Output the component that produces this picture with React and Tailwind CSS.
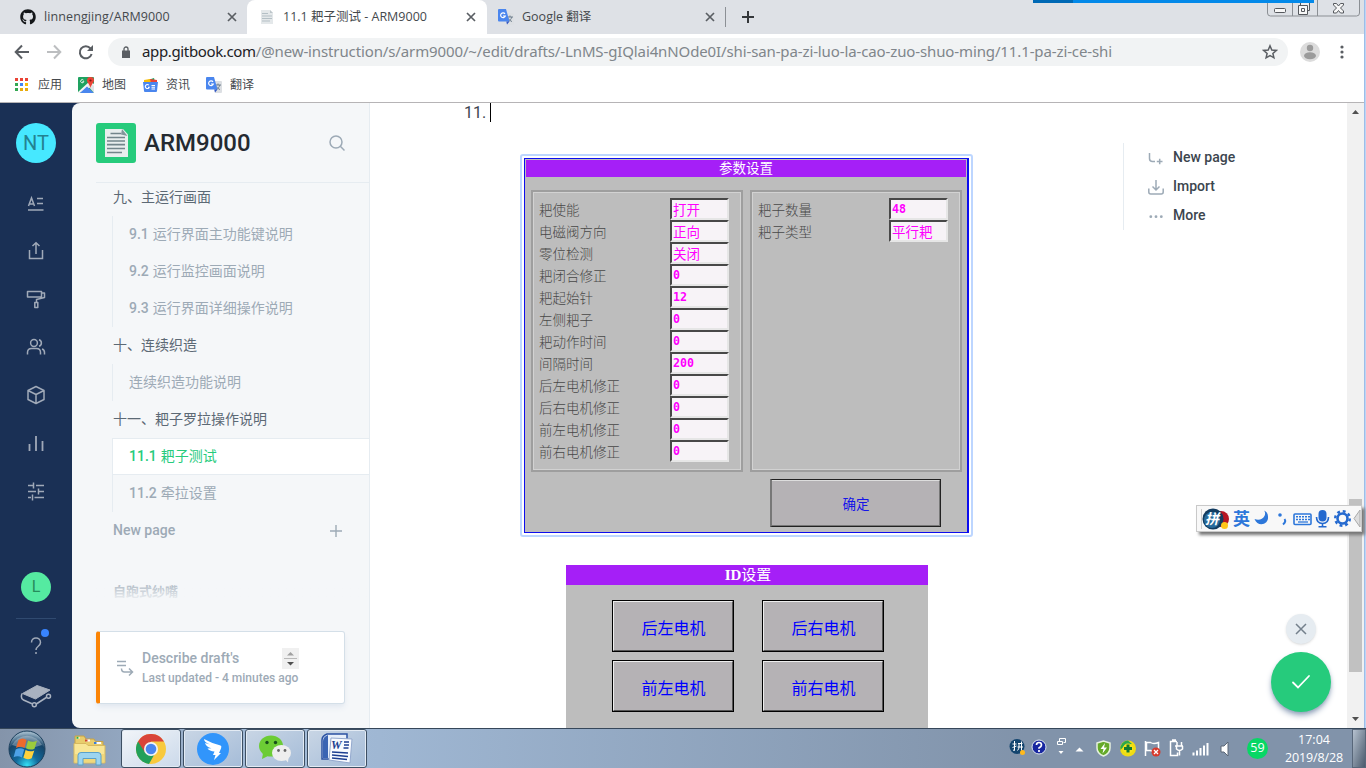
import React from "react";
import { FaGithub } from "react-icons/fa";

const UI = "font-['Open_Sans','Noto_Sans_CJK_SC',sans-serif]";
const RB = "font-['Roboto','Noto_Sans_CJK_SC',sans-serif]";
const HMI = "font-['DejaVu_Sans_Mono','Noto_Sans_CJK_SC',monospace]";

function CloseX() {
  return (
    <svg width="10" height="10" viewBox="0 0 10 10" stroke="#5a5e63" strokeWidth="1.7">
      <path d="M1 1l8 8M9 1l-8 8" />
    </svg>
  );
}

function Translate() {
  return (
    <svg width="16" height="16" viewBox="0 0 16 16" className="shrink-0">
      <path d="M6 4h9a1 1 0 0 1 1 1v10a1 1 0 0 1-1 1H9z" fill="#dcdfe3" />
      <path d="M9 8h6M12 6.5V8M13.8 8c-.4 2-1.8 3.6-3.6 4.5M10.6 9.5c.8 1.5 2 2.600 3.400 3" stroke="#6f7f8d" fill="none" />
      <path d="M1 0h7l3.500 12.500H1a1 1 0 0 1-1-1V1a1 1 0 0 1 1-1z" fill="#4a86ee" />
      <path d="M8.300 12.500h3.200L9 15.600z" fill="#3056c4" />
      <path d="M7 4.800A2.400 2.400 0 1 0 7.300 7H5" stroke="#fff" strokeWidth="1.200" fill="none" />
    </svg>
  );
}

function Tabs() {
  return (
    <div className="relative flex h-[34px] shrink-0 bg-[#dee1e6] text-[12px] text-[#45494d]">
      <div className="flex w-[247px] items-center pl-5 pr-[10px]">
        <FaGithub size={16} color="#14171a" />
        <span className="ml-2 flex-1 pt-px text-[12.500px] tracking-[0.1px]">linnengjing/ARM9000</span>
        <CloseX />
      </div>
      <div className="flex w-[240px] items-center rounded-t-lg bg-white pl-[13px] pr-[11px]">
        <svg width="14" height="16" viewBox="0 0 14 16">
          <path d="M1 1h9l3 3v11H1z" fill="#e4e8ea" />
          <path d="M10 1v3h3" fill="#bdc6ca" />
          <path d="M2 4.500h6M2 7h10M2 9.500h10M2 12h8" stroke="#b4bfc5" />
        </svg>
        <span className="ml-[9px] flex-1 pt-px text-[12.500px]">11.1 耙子测试 - ARM9000</span>
        <CloseX />
      </div>
      <div className="flex w-[238px] items-center pl-[11px] pr-[10px]">
        <Translate />
        <span className="ml-2 flex-1 pt-px text-[12.500px]">Google 翻译</span>
        <CloseX />
      </div>
      <div className="my-[7px] w-px bg-[#8c9095]" />
      <div className="ml-4 flex items-center">
        <svg width="12" height="12" viewBox="0 0 12 12" stroke="#34373a" strokeWidth="2">
          <path d="M6 0v12M0 6h12" />
        </svg>
      </div>
      <svg className="absolute left-[1266px] top-0" width="96" height="18" viewBox="0 0 96 18" fill="none">
        <path d="M1.500 0v13q0 3 3 3h86q3 0 3-3V0M26.500 0v16M51.500 0v16" stroke="#8b8f94" />
        <rect x="8.500" y="8.500" width="11" height="4" rx="1" fill="#f7f7f7" stroke="#55585d" />
        <path d="M34.500 2.500h9v8h-9z" fill="#eee" stroke="#55585d" />
        <path d="M32.500 5.500h9v9h-9z" fill="#f7f7f7" stroke="#55585d" />
        <path d="M35.500 8.500h3v3h-3z" stroke="#55585d" />
        <path d="M67.500 3.500h3l2 2.500 2-2.500h3v1.500l-3 3 3 3v2h-3l-2-2.500-2 2.500h-3v-2l3-3-3-3z" fill="#f7f7f7" stroke="#55585d" />
      </svg>
      <div className="absolute left-[1033px] top-0 flex h-[3px] w-[281px] bg-[#0389e9]">
        <div className="w-10 bg-[#0069b5]" />
      </div>
    </div>
  );
}

function Toolbar() {
  return (
    <div className="flex h-9 shrink-0 items-center bg-white">
      <svg className="ml-[14px] shrink-0" width="82" height="18" viewBox="0 0 82 18" fill="none" strokeWidth="2">
        <path d="M15 9H2M8 2.500L1.700 9 8 15.500" stroke="#5a5e63" />
        <path d="M33 9h13M40 2.500L46.300 9 40 15.500" stroke="#bcbec0" />
        <path d="M76.500 5.500A6 6 0 1 0 77.600 11" stroke="#5a5e63" />
        <path d="M79 2v6h-6z" fill="#5a5e63" />
      </svg>
      <div className="ml-[12px] flex h-7 w-[1180px] items-center rounded-full bg-[#f1f3f4] pl-[14px] pr-[10px]">
        <svg width="8" height="12" viewBox="0 0 8 12">
          <path d="M0 4.500h8V12H0z" fill="#5a5e63" />
          <path d="M2 5V3a2 2 0 0 1 4 0v2" stroke="#5a5e63" strokeWidth="1.300" fill="none" />
        </svg>
        <span className="ml-3 flex-1 whitespace-nowrap pb-[2px] font-['Noto_Sans',sans-serif] text-[15px] leading-[20px] tracking-[-0.12px] text-[#80868b]">
          <span className="tracking-[-0.36px] text-[#202124]">app.gitbook.com</span>
          /@new-instruction/s/arm9000/~/edit/drafts/-LnMS-gIQlai4nNOde0I/shi-san-pa-zi-luo-la-cao-zuo-shuo-ming/11.1-pa-zi-ce-shi
        </span>
        <svg width="16" height="16" viewBox="0 0 16 16" fill="none" stroke="#5a5e63" strokeWidth="1.500">
          <path d="M8 1.800l1.800 4.200 4.500.4-3.400 3 1 4.400L8 11.500l-3.900 2.300 1-4.400-3.400-3 4.500-.4z" />
        </svg>
      </div>
      <svg className="ml-3" width="20" height="20" viewBox="0 0 20 20">
        <circle cx="10" cy="10" r="10" fill="#dcdcdc" />
        <circle cx="10" cy="6" r="3.200" fill="#9b9b9b" />
        <ellipse cx="10" cy="13.700" rx="6" ry="3.500" fill="#9b9b9b" />
      </svg>
      <svg className="ml-[20px]" width="4" height="14" viewBox="0 0 4 14" fill="#5a5e63">
        <circle cx="2" cy="2" r="1.600" /><circle cx="2" cy="7" r="1.600" /><circle cx="2" cy="12" r="1.600" />
      </svg>
    </div>
  );
}

const appDots = ["#ea4335", "#ea4335", "#ea4335", "#34a853", "#4285f4", "#fbbc05", "#34a853", "#e8ab0c", "#e8ab0c"];

function Bookmarks() {
  return (
    <div className="flex h-8 shrink-0 items-center bg-white pb-[3px] pl-[15px] text-[12px] text-[#45494d]">
      <div className="grid w-[13px] grid-cols-3 gap-[2px]">
        {appDots.map((c, i) => <i key={i} className="h-[3px] w-[3px]" style={{ background: c }} />)}
      </div>
      <span className="ml-[10px] w-10 pt-px">应用</span>
      <svg width="16" height="16" viewBox="0 0 16 16">
        <rect width="16" height="16" rx="1" fill="#1fa260" />
        <path d="M0 15L12 4l4 3v2l-8 3-6 4H0z" fill="#f4f4f4" />
        <path d="M2 16l7-6.500 7 6.500z" fill="#4a86ee" />
        <path d="M12 6l4 3v7l-6-7z" fill="#dfe3e6" />
        <path d="M12.500 0a3.500 3.500 0 0 1 3.500 3.600c0 2.400-2.600 3.400-3.500 7.400C11.600 7 9 6 9 3.600A3.500 3.500 0 0 1 12.500 0z" fill="#ea4335" />
        <circle cx="12.500" cy="3.500" r="1.100" fill="#811411" />
        <path d="M5.500 3.200A1.600 1.600 0 1 0 5.800 4.600H4.500" stroke="#fff" fill="none" strokeWidth=".9" />
      </svg>
      <span className="ml-2 w-[41px] pt-px">地图</span>
      <svg width="15" height="14" viewBox="0 0 15 14">
        <path d="M2 3l9-3 1 4H2z" fill="#1fa260" />
        <path d="M7 1l7 1v4H7z" fill="#ea4335" />
        <path d="M1 2l6-1 1 4H1z" fill="#fbbc05" />
        <path d="M0 4h15l-1 9a1 1 0 0 1-1 1H2a1 1 0 0 1-1-1z" fill="#4a86ee" />
        <path d="M5.800 7.200A2 2 0 1 0 6.200 9.200H5M8.500 7.500H12M8.500 9.200H12M8.500 11H12" stroke="#fff" fill="none" strokeWidth="1.100" />
      </svg>
      <span className="ml-[8px] w-10 pt-px">资讯</span>
      <Translate />
      <span className="ml-2 pt-px">翻译</span>
    </div>
  );
}

const railIcons = [
  <><path d="M2.500 13L5.500 5l3 8M3.500 11h4M11 5.500h6M11 10.500h6M2 17h15.500" /></>,
  <><path d="M3.500 9v8.500h13V9M10 13V2M6.500 5L10 1.800 13.500 5" /></>,
  <><path d="M1.500 2.500h14v5.500h-14zM15.500 4h3v4.500l-8 2v3M8.800 13.500h3v5h-3z" strokeLinejoin="round" /></>,
  <><circle cx="8" cy="6" r="3.400" /><path d="M1.500 17.500v-2q0-4 4-4h5q4 0 4 4v2M13 2.700a3.400 3.400 0 0 1 0 6.500M16 12q2.500.7 2.500 3.500v2" /></>,
  <><path d="M10 1.500l8 4v9l-8 4-8-4v-9zM2 5.500l8 4 8-4M10 9.500v9" strokeLinejoin="round" /></>,
  <><path d="M3.500 11v7M10 3v15M16.500 8v10" strokeWidth="1.800" /></>,
  <><path d="M2 4.500h5M10 4.500h8M7.500 1.500v6M2 10.500h8M13 10.500h5M12.500 7.500v6M2 16.500h3M8.500 16.500H18M6.500 13.500v6" /></>,
];

function Rail() {
  return (
    <div className="flex w-[72px] shrink-0 flex-col items-center bg-[#1a3055] pt-5">
      <div className="flex h-10 w-10 items-center justify-center rounded-full bg-[#46e8ff] text-[20px] text-[#238291]">NT</div>
      <div className="mt-[30px] flex flex-col gap-[28px]">
        {railIcons.map((p, i) => (
          <svg key={i} width="20" height="20" viewBox="0 0 20 20" fill="none" stroke="#a0a9b8" strokeWidth="1.500">{p}</svg>
        ))}
      </div>
      <div className="mt-[71px] flex h-[30px] w-[30px] items-center justify-center rounded-full bg-[#55eaa1] text-[16px] text-[#268d5c]">L</div>
      <div className="mt-4 h-px w-10 bg-[#304a70]" />
      <svg className="mt-[9px] ml-[2px]" width="30" height="30" viewBox="0 0 30 30" fill="none">
        <path d="M9.500 14.500c0-6 9-6 9 0 0 4-4.500 3.500-4.500 7.500" stroke="#a0a9b8" strokeWidth="1.500" />
        <circle cx="14" cy="25" r="1" fill="#a0a9b8" />
        <circle cx="23" cy="5" r="4" fill="#3884ff" />
      </svg>
      <svg className="mt-[26px]" width="32" height="24" viewBox="0 0 32 24" fill="none">
        <path d="M2.500 9.500L17 1.500 30 6 15.500 15z" fill="#a9b2c0" stroke="#a9b2c0" strokeLinejoin="round" />
        <path d="M2 9.500q-1.800 5 1.500 6.500l8.500 3.800M16.300 20l10-6.500" stroke="#a9b2c0" strokeWidth="1.500" />
        <circle cx="14.300" cy="20.700" r="2" stroke="#a9b2c0" strokeWidth="1.500" />
        <circle cx="28.500" cy="12.300" r="2" stroke="#a9b2c0" strokeWidth="1.500" />
      </svg>
    </div>
  );
}

function Chapter({ children }) {
  return <div className="flex h-[37px] items-center pl-[17px] text-[#5c6975]">{children}</div>;
}
function Page({ children }) {
  return <div className="flex h-[37px] items-center pl-4">{children}</div>;
}

function Sidebar() {
  return (
    <div className="flex w-[298px] shrink-0 flex-col rounded-l-lg border-r border-[#e6ecf1] bg-[#f5f7f9] pl-6 text-[14px] font-medium text-[#9daab6]">
      <div className="flex h-20 shrink-0 items-center border-b border-[#e6ecf1] pr-[23px]">
        <svg width="40" height="40" viewBox="0 0 40 40">
          <rect width="40" height="40" rx="3" fill="#26cb7c" />
          <path d="M9 6h18l5 5.500V34H9z" fill="#e8eeee" />
          <path d="M26 6l5.500 7L25 11.500z" fill="#82969b" />
          <path d="M14.500 10.500H25M11 14.500h18M11 18h18M11 21.700h18M11 25.500h18M11 29.500h15" stroke="#72858b" strokeWidth="1.700" />
        </svg>
        <span className="ml-2 flex-1 text-[24px] text-[#242a31]">ARM9000</span>
        <svg width="18" height="18" viewBox="0 0 18 18" fill="none" stroke="#9daab6" strokeWidth="1.500">
          <circle cx="8" cy="8" r="6" /><path d="M12.300 12.300L16.500 16.500" />
        </svg>
      </div>
      <div className="flex h-[33px] shrink-0 items-center pb-1 pl-[17px] font-normal text-[#5c6975]">九、主运行画面</div>
      <div className="ml-4 border-l border-[#e6ecf1] font-normal">
        <Page><b className="mr-1 font-medium">9.1</b>运行界面主功能键说明</Page>
        <Page><b className="mr-1 font-medium">9.2</b>运行监控画面说明</Page>
        <Page><b className="mr-1 font-medium">9.3</b>运行界面详细操作说明</Page>
      </div>
      <div className="font-normal"><Chapter>十、连续织造</Chapter></div>
      <div className="ml-4 border-l border-[#e6ecf1] font-normal"><Page>连续织造功能说明</Page></div>
      <div className="font-normal"><Chapter>十一、耙子罗拉操作说明</Chapter></div>
      <div className="ml-4 border-l border-[#e6ecf1] font-normal">
        <div className="flex h-[37px] items-center border-y border-[#e6ecf1] bg-white pl-4 text-[#26cb7c]"><b className="mr-1 font-medium">11.1</b>耙子测试</div>
        <Page><b className="mr-1 font-medium">11.2</b>牵拉设置</Page>
      </div>
      <div className="flex h-[37px] items-center justify-between pl-[17px] pr-[27px]">
        <span>New page</span>
        <svg width="12" height="12" viewBox="0 0 12 12" stroke="#9daab6" strokeWidth="1.400"><path d="M6 0v12M0 6h12" /></svg>
      </div>
      <div className="relative mt-[32px] h-[21px] pl-[17px] text-[13px] font-bold leading-[21px] text-[#9daab6]">
        自跑式纱嘴
        <div className="absolute inset-0 bg-gradient-to-b from-[#f5f7f9]/10 to-[#f5f7f9]" />
      </div>
      <div className="mr-6 mt-[29px] flex h-[73px] shrink-0 items-center rounded-[3px] border border-l-4 border-[#d4dfe8] border-l-[#fb8405] bg-white pl-[17px] shadow-md shadow-slate-200">
        <svg width="17" height="18" viewBox="0 0 17 18" fill="none" stroke="#9daab6" strokeWidth="1.500">
          <path d="M0 2.500h9M0 6.500h9M4.500 9.500q0 3.500 3 3.500H15M12 9.500l3.500 3.500L12 16.500" />
        </svg>
        <div className="ml-2 w-[157px]">
          <div className="flex h-[21px] items-center justify-between">
            <span>Describe draft's</span>
            <svg width="17" height="21" viewBox="0 0 17 21">
              <rect width="17" height="21" fill="#f0f0f0" />
              <path d="M5 7.500L8.500 4 12 7.500z" fill="#a0a0a0" /><path d="M2 10.500h13" stroke="#b8b8b8" />
              <path d="M5 14l3.500 3.500L12 14z" fill="#505050" />
            </svg>
          </div>
          <div className="h-[18px] whitespace-nowrap text-[12px] leading-[18px]">Last updated - 4 minutes ago</div>
        </div>
      </div>
    </div>
  );
}

const leftFields = [
  ["耙使能", "打开"], ["电磁阀方向", "正向"], ["零位检测", "关闭"], ["耙闭合修正", "0"], ["耙起始针", "12"], ["左侧耙子", "0"],
  ["耙动作时间", "0"], ["间隔时间", "200"], ["后左电机修正", "0"], ["后右电机修正", "0"], ["前左电机修正", "0"], ["前右电机修正", "0"],
];
const rightFields = [["耙子数量", "48"], ["耙子类型", "平行耙"]];

function Fields({ rows }) {
  return (
    <div className="h-[282px] w-[212px] border-2 border-[#9e9e9e]">
      <div className="h-full border border-[#d2d2d2] pl-[5px] pr-[11px] pt-[5px]">
        {rows.map(([k, v]) => (
          <div key={k} className="flex h-[22px] items-start justify-between">
            <span className="pt-[2px] text-[13.500px] font-light leading-[20px] text-[#484848]">{k}</span>
            <span className={"h-[22px] w-[59px] border-b-2 border-l-2 border-r-2 border-t-2 border-b-[#e6e6e6] border-l-[#484848] border-r-[#e6e6e6] border-t-[#484848] bg-[#f7f3f7] text-[#ff00ff] " + (/\d/.test(v) ? "pl-px text-[11.700px] font-bold leading-[19px]" : "pl-px text-[13.500px] leading-[20px]")}>{v}</span>
          </div>
        ))}
      </div>
    </div>
  );
}

function MotorButton({ children }) {
  return (
    <div className="h-[52px] w-[122px] border border-black">
      <div className="flex h-full items-center justify-center border-b border-l border-r border-t border-b-[#555] border-l-[#eee] border-r-[#555] border-t-[#eee] bg-[#b5b2b5] pl-px pt-[6px] text-[16px] text-[#0000ff]">{children}</div>
    </div>
  );
}

function Editor() {
  return (
    <div className="flex flex-1 overflow-hidden bg-white">
      <div className="w-[753px] shrink-0">
        <div className="flex h-[51px] items-start pl-[94px] text-[16px] leading-[19px] text-[#3b454e]">
          11.<span className="ml-[4px] h-[19px] w-px bg-black" />
        </div>
        <div className={"ml-[150px] h-[383px] w-[453px] rounded-[3px] border-2 border-[#bdd6ff] p-[2px] pr-[2px] " + HMI}>
          <div className="flex h-[375px] w-[445px] flex-col border border-r-2 border-[#0d0dee] bg-[#bdbdbd] pt-px">
            <div className="mx-px h-[17px] bg-[#a51ff7] text-center text-[13.500px] leading-[16px] text-white">参数设置</div>
            <div className="mt-[13px] flex gap-[7px] pl-[6px]">
              <Fields rows={leftFields} />
              <Fields rows={rightFields} />
            </div>
            <div className="ml-[245px] mt-[7px] h-[48px] w-[171px] border border-l-2 border-[#222] border-l-[#777]">
              <div className="flex h-full items-center justify-center border-b border-r border-t border-b-[#777] border-r-[#777] border-t-[#ddd] bg-[#b5b2b5] pl-px pt-[3px] text-[13.500px] text-[#1515e8]">确定</div>
            </div>
          </div>
        </div>
        <div className={"ml-[196px] mt-[28px] h-[170px] w-[362px] bg-[#bdbdbd] " + HMI}>
          <div className="h-[20px] bg-[#a51ff7] pl-[2px] text-center text-[15px] leading-[21px] text-white"><b className="font-['Liberation_Serif',serif]">ID</b>设置</div>
          <div className="mt-[15px] grid grid-cols-[122px_122px] gap-x-[28px] gap-y-2 pl-[46px]">
            <MotorButton>后左电机</MotorButton>
            <MotorButton>后右电机</MotorButton>
            <MotorButton>前左电机</MotorButton>
            <MotorButton>前右电机</MotorButton>
          </div>
        </div>
      </div>
      <div className="mt-10 flex h-[87px] flex-col border-l border-[#e6ecf1] pl-6 text-[14px] font-medium text-[#3b454e]">
        <div className="flex h-[29px] items-center gap-[9px]">
          <svg width="16" height="16" viewBox="0 0 16 16" fill="none" stroke="#9daab6" strokeWidth="1.500"><path d="M1.500 3v5.500q0 3 3 3H7M8.800 11.500H14.500M11.700 8.700v5.600" /></svg>
          New page
        </div>
        <div className="flex h-[29px] items-center gap-[9px]">
          <svg width="16" height="16" viewBox="0 0 16 16" fill="none" stroke="#9daab6" strokeWidth="1.500"><path d="M.8 9.500V13q0 2 2 2h10.400q2 0 2-2V9.500M8 1v10M4.500 7.500L8 11l3.500-3.500" /></svg>
          Import
        </div>
        <div className="flex h-[29px] items-center gap-[9px]">
          <svg width="16" height="16" viewBox="0 0 16 16" fill="#9daab6"><circle cx="2.800" cy="8.700" r="1.400" /><circle cx="8" cy="8.700" r="1.400" /><circle cx="13.300" cy="8.700" r="1.400" /></svg>
          More
        </div>
      </div>
    </div>
  );
}

function Scrollbar() {
  return (
    <div className="flex w-[17px] shrink-0 flex-col items-center bg-[#f1f1f1]">
      <svg width="17" height="17" viewBox="0 0 17 17"><path d="M5 11l3.500-4 3.500 4z" fill="#505050" /></svg>
      <div className="mt-[379px] h-[173px] w-[13px] bg-[#c1c1c1]" />
      <div className="flex-1" />
      <svg width="17" height="17" viewBox="0 0 17 17"><path d="M5 6l3.500 4L12 6z" fill="#505050" /></svg>
    </div>
  );
}

function Ime() {
  return (
    <div className="absolute left-[1196px] top-[505px] flex h-[27px] w-[166px] items-center border border-[#c9c9c9] bg-[#f8f8f8] shadow-[3px_3px_3px_#777]">
      <svg width="164" height="25" viewBox="0 0 164 25" fill="none">
        <path d="M4.500 3v20" stroke="#ccc" />
        <circle cx="24" cy="13" r="8" fill="#b51523" />
        <circle cx="16" cy="13" r="10.500" fill="#123c60" />
        <circle cx="15" cy="14" r="8" fill="#286b9b" />
        <path d="M67 4.500c3.500 4-1.500 11.500-9.500 8.500 3 8.500 14.500 6 13.500-2.500 0-3-1.500-5-4-6z" fill="#2d77da" />
        <circle cx="83" cy="9" r="1.800" fill="#2d77da" />
        <path d="M87.500 13q2 2.500-1.500 5.500" stroke="#2d77da" strokeWidth="2" />
        <rect x="97" y="8" width="17" height="10.500" rx="1" stroke="#2d77da" strokeWidth="1.600" />
        <path d="M99 10.800h14M99 13.400h14" stroke="#2d77da" strokeWidth="1.500" strokeDasharray="2 1" />
        <path d="M101 16h10" stroke="#2d77da" strokeWidth="1.300" />
        <rect x="121.500" y="4" width="8" height="11.500" rx="4" fill="#2469cf" />
        <path d="M119.500 11q0 6.500 6 6.500t6-6.500M125.500 17.500v3M121.500 20.700h8" stroke="#2469cf" strokeWidth="1.600" />
        <circle cx="145.500" cy="12.500" r="5" stroke="#2469cf" strokeWidth="2.600" />
        <circle cx="145.500" cy="12.500" r="7.300" stroke="#2469cf" strokeWidth="2.400" strokeDasharray="2.870 2.870" />
        <path d="M163 4l-6 8.500 6 8.500z" fill="#ddd" stroke="#aaa" />
      </svg>
      <span className="absolute left-[8px] text-[14px] font-bold italic text-white">拼</span>
      <span className="absolute left-[24px] top-[16px] h-[7px] w-[7px] rounded-full bg-[#ffc61a]" />
      <span className="absolute left-[36px] text-[17px] font-bold text-[#2d77da]">英</span>
    </div>
  );
}

function AppButton({ active, children }) {
  return (
    <div className={"flex h-[39px] w-[60px] items-center justify-center rounded-[3px] border border-[#3d4f63] shadow-[inset_0_0_0_1px_#e3ebf4] " + (active ? "bg-gradient-to-br from-[#f2f5f9] to-[#cbd9ea]" : "bg-gradient-to-br from-[#c9d6e5] to-[#a5bcd8]")}>
      {children}
    </div>
  );
}

function Taskbar() {
  return (
    <div className="flex h-10 shrink-0 border-t border-[#36475a] bg-gradient-to-r from-[#8494aa] via-[#a4bdda] via-20% to-[#8193aa] to-75%">
      <svg className="ml-2 mt-px shrink-0" width="38" height="38" viewBox="0 0 38 38">
        <defs>
          <radialGradient id="orb" cx=".5" cy=".95" r=".9"><stop offset="0" stopColor="#35e0f5" /><stop offset=".35" stopColor="#126a9c" /><stop offset=".75" stopColor="#164468" /><stop offset="1" stopColor="#9cb6c8" /></radialGradient>
        </defs>
        <circle cx="19" cy="19" r="18" fill="url(#orb)" stroke="#1c3f5c" />
        <path d="M4 15a16 14 0 0 1 30 0q-15 6-30 0z" fill="#fff" opacity=".3" />
        <path d="M10.500 10q4-3 8 0l-2 8q-4-2.500-8.500 0z" fill="#ee6a2c" />
        <path d="M20 10.500q4.500 2.500 9 .2l-2.500 8q-4 2-8.500-.4z" fill="#9bcb3c" />
        <path d="M7.700 19.500q4.500-2.500 8.500 0l-2.400 8q-4-2.500-8.200-.2z" fill="#4da2e6" />
        <path d="M17.600 20q4.500 2.500 8.700.4l-2.600 7.800q-4.200 2.200-8.300-.4z" fill="#ffd23d" />
      </svg>
      <svg className="ml-[27px] mt-[6px] shrink-0" width="34" height="31" viewBox="0 0 34 31">
        <path d="M2 1h9l2 3h8l1.500 2.500H30V14H2z" fill="#e9cd6c" stroke="#c5a248" />
        <path d="M3.500 2.800h3M13 5.500h4M22 8h6" stroke="#fff" strokeWidth="1.800" />
        <path d="M3.500 2.800h2" stroke="#2faf42" strokeWidth="2" /><path d="M12 5.500h2.500" stroke="#d0442c" strokeWidth="2" /><path d="M21 8h2.500" stroke="#3b7fd6" strokeWidth="2" />
        <path d="M1 8.500h12l2 2h17V28H1z" fill="#f8e696" stroke="#d7b95f" />
        <path d="M2 19h29v8H2z" fill="#f1d87b" />
        <path d="M5 30V20.500q0-3 3-3h17q3 0 3 3V30h-5v-6.500H10V30z" fill="#9cd4ef" stroke="#5ba1c9" />
      </svg>
      <div className="ml-[14px] flex gap-[2px]">
        <AppButton active>
          <svg width="30" height="30" viewBox="0 0 30 30">
            <circle cx="15" cy="15" r="15" fill="#f8c93d" />
            <path d="M15 15L2 7.500a15 15 0 0 0 11 22.400l6.500-11.500z" fill="#22a05a" />
            <path d="M2 7.500a15 15 0 0 1 26 0H15L9 18.500z" fill="#d9443a" />
            <circle cx="15" cy="15" r="7" fill="#f3f3f3" /><circle cx="15" cy="15" r="5.300" fill="#4a86ee" />
          </svg>
        </AppButton>
        <AppButton>
          <svg width="32" height="32" viewBox="0 0 32 32"><circle cx="16" cy="16" r="16" fill="#3195fb" /><path d="M7 6q7 4 16.500 6.500 1.500.5.500 3L22 20h2l-7 7 1.500-5H16l1.500-3.500q-5-.5-7-3l4-.3Q9 14 8 10l5 1.500Q7 9 7 6z" fill="#fff" /></svg>
        </AppButton>
        <AppButton>
          <svg width="32" height="28" viewBox="0 0 32 28">
            <ellipse cx="12" cy="11" rx="12" ry="10.500" fill="#6ccc35" /><path d="M4 18l-1 6 6-3z" fill="#6ccc35" />
            <circle cx="8" cy="7.500" r="1.700" fill="#17501b" /><circle cx="16.500" cy="7.500" r="1.700" fill="#17501b" />
            <ellipse cx="22.500" cy="18" rx="9.500" ry="8" fill="#eeeeee" /><path d="M26 24l3 3.500.5-5z" fill="#eee" />
            <circle cx="19.500" cy="15.500" r="1.400" fill="#666" /><circle cx="26" cy="15.500" r="1.400" fill="#666" />
          </svg>
        </AppButton>
        <AppButton>
          <span className="relative">
            <svg width="32" height="31" viewBox="0 0 32 31">
              <path d="M6 1h20v25H1V7q0-4 5-6z" fill="#e7effa" stroke="#2b52a3" strokeWidth="1.500" />
              <path d="M7 2v23H2V8q0-4 5-6z" fill="#3a64b3" />
              <path d="M10 5l21 1-2 24-21-3z" fill="#f9fbff" stroke="#94a9ce" />
              <path d="M23 9h5M23 12h5M22.500 15h5M11 19l16 1M11 22l16 1.500M11 25l15 1.500" stroke="#1d3f91" strokeWidth="1.500" />
            </svg>
            <b className="absolute left-[10px] top-[5px] font-['Liberation_Serif',serif] text-[12px] italic leading-[14px] text-[#1d3f91]">W</b>
          </span>
        </AppButton>
      </div>
      <div className="flex-1" />
      <svg className="mt-[9px]" width="230" height="24" viewBox="0 0 230 24" fill="none">
        <circle cx="8" cy="8.500" r="7.500" fill="#13456f" /><path d="M3.500 6h4M5.500 3v9.500L4 12M3.500 9.500l4-1.500M9 5.500h4.500M8.500 9h5.500M10 5.500V9q0 2-1.500 3.500M12.500 3.500v9" stroke="#fff" />
        <circle cx="13.500" cy="14.500" r="2.500" fill="#ffb91c" />
        <circle cx="30" cy="9" r="7" fill="#1726a0" stroke="#dce4ef" />
        <path d="M27.500 7q0-2.500 2.500-2.500T32.500 7q0 1.500-2.500 3v.8M30 12v2" stroke="#fff" strokeWidth="1.700" />
        <path d="M50.500 3v-2.500h6v4h-2M48.500 3.500h5v3h-5z" stroke="#fff" /><path d="M49.500 13l2.500 3 2.500-3z" fill="#fff" />
        <path d="M66.500 13.500l4-4 4 4z" fill="#fff" />
        <path d="M88 5l6.500-2 6.500 2v5q0 5.500-6.500 8-6.500-2.500-6.500-8z" fill="#65aa2a" stroke="#e6f1df" strokeWidth="1.500" /><path d="M96 5l-4.500 6h3l-1 4.500 4.500-6h-3z" fill="#fff" />
        <circle cx="119" cy="10.500" r="8" fill="#f0dc13" /><path d="M111.500 12a8 8 0 0 1 7.500-9.500l4 3.500q-7-.5-11.500 6z" fill="#2ca84c" /><circle cx="119" cy="10.500" r="5" fill="#f7e41d" /><path d="M115 10.500h8M119 6.500v8" stroke="#137a30" strokeWidth="3" />
        <path d="M136.500 3v15M137.500 4.500h4q3 2 8 0v8q-4 2-8 0h-4z" stroke="#fff" strokeWidth="1.500" /><circle cx="147" cy="14" r="4.500" fill="#d83a2c" /><path d="M145 12l4 4M149 12l-4 4" stroke="#fff" strokeWidth="1.300" />
        <path d="M168 3.500h-6.500v14h7v-3M163 2h4M166 8h8M168 4v4M172.500 4v4M167.500 8v3q3 3 6 0V8M170.500 13v4.500" stroke="#fff" strokeWidth="1.500" />
        <path d="M184.500 14.500v3M188 12.500v5M191.500 10v7.500M195 7.500v10M198.500 5v12.500" stroke="#fff" strokeWidth="2" />
        <path d="M212 8h3l4-4v14l-4-4h-3z" fill="#fff" stroke="#5b6776" />
      </svg>
      <div className="ml-[8px] mr-px mt-[9px] flex h-[21px] w-[21px] items-center justify-center rounded-full bg-[#08d765] text-[12.500px] text-white">59</div>
      <div className="ml-[14px] w-[62px] pt-[2px] text-center text-[12.500px] leading-[18px] text-white"><div>17:04</div><div className="whitespace-nowrap tracking-[-0.15px]">2019/8/28</div></div>
      <div className="ml-[7px] w-[14px] border border-[#58677a] bg-gradient-to-br from-[#b6c2d0] to-[#4c5b6d]" />
    </div>
  );
}

export default function App() {
  return (
    <div className={"relative flex h-[768px] w-[1366px] flex-col overflow-hidden bg-white " + UI}>
      <div className="flex h-[728px] shrink-0">
        <div className="flex w-[1364px] flex-col">
          <Tabs />
          <Toolbar />
          <Bookmarks />
          <div className={"flex min-h-0 flex-1 border-t border-[#b6b4b6] bg-[#1a3055] " + RB}>
            <Rail />
            <Sidebar />
            <Editor />
            <Scrollbar />
          </div>
        </div>
        <div className="w-[2px] border-l border-[#9dbde8] bg-[#bcd6f5]" />
      </div>
      <Taskbar />
      <Ime />
      <div className="absolute left-[1286px] top-[614px] flex h-[30px] w-[30px] items-center justify-center rounded-full bg-[#e6ecf1] shadow-sm">
        <svg width="12" height="12" viewBox="0 0 12 12" stroke="#74808c" strokeWidth="1.500"><path d="M1 1l10 10M11 1L1 11" /></svg>
      </div>
      <div className="absolute left-[1271px] top-[652px] flex h-[60px] w-[60px] items-center justify-center rounded-full bg-[#26cb7c] shadow-md shadow-slate-400">
        <svg width="20" height="16" viewBox="0 0 20 16" fill="none" stroke="#fff" strokeWidth="1.800" strokeLinecap="round"><path d="M2 8.500l5 5L18 2" /></svg>
      </div>
    </div>
  );
}
